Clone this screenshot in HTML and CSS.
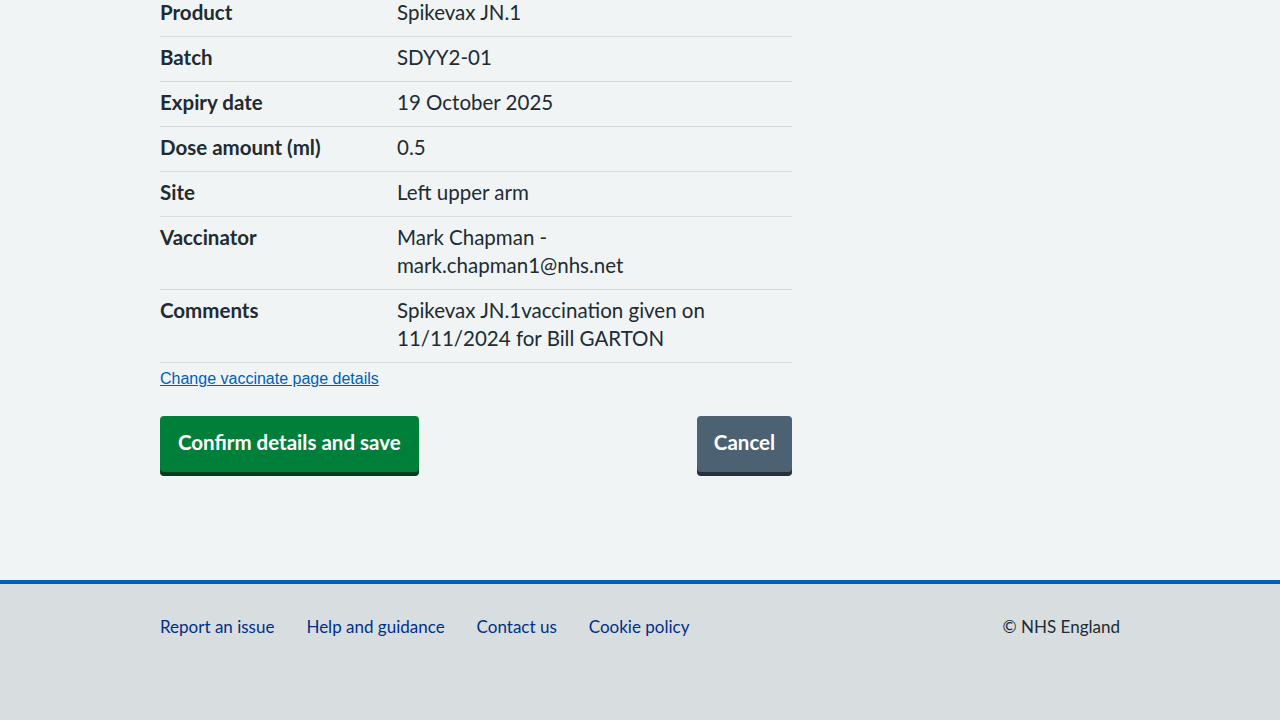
FILE: index.html
```html
<!DOCTYPE html>
<html lang="en">
<head>
<meta charset="utf-8">
<title>Check and confirm</title>
<link rel="stylesheet" href="styles.css">
</head>
<body>
<main class="page">
  <div class="container">
    <div class="content">
      <dl class="summary">
        <div class="row"><dt class="key">Product</dt><dd class="value">Spikevax JN.1</dd></div>
        <div class="row"><dt class="key">Batch</dt><dd class="value">SDYY2-01</dd></div>
        <div class="row"><dt class="key">Expiry date</dt><dd class="value">19 October 2025</dd></div>
        <div class="row"><dt class="key">Dose amount (ml)</dt><dd class="value">0.5</dd></div>
        <div class="row"><dt class="key">Site</dt><dd class="value">Left upper arm</dd></div>
        <div class="row"><dt class="key">Vaccinator</dt><dd class="value">Mark Chapman - mark.chapman1@nhs.net</dd></div>
        <div class="row"><dt class="key">Comments</dt><dd class="value">Spikevax JN.1vaccination given on 11/11/2024 for Bill GARTON</dd></div>
      </dl>
      <p class="change"><a class="change-link" href="#">Change vaccinate page details</a></p>
      <div class="actions">
        <button class="button button-primary" type="button">Confirm details and save</button>
        <button class="button button-secondary" type="button">Cancel</button>
      </div>
    </div>
  </div>
</main>
<footer class="footer">
  <div class="container footer-inner">
    <ul class="footer-links">
      <li><a href="#">Report an issue</a></li>
      <li><a href="#">Help and guidance</a></li>
      <li><a href="#">Contact us</a></li>
      <li><a href="#">Cookie policy</a></li>
    </ul>
    <p class="copyright">© NHS England</p>
  </div>
</footer>
</body>
</html>
```

FILE: styles.css
```css
* { box-sizing: border-box; }
html, body { margin: 0; padding: 0; }
body {
  background: #f0f4f5;
  color: #212b32;
  font-family: Lato, "Noto Sans", sans-serif;
  height: 720px;
  overflow: hidden;
}
.container {
  width: 960px;
  margin: 0 auto;
}
.page {
  padding-bottom: 108px;
}
.content {
  width: 632px;
  margin-top: -8px;
}
.summary {
  margin: 0;
  font-size: 20.5px;
  line-height: 28px;
}
.row {
  display: flex;
  border-bottom: 1px solid #d8dde0;
}
.key {
  width: 237px;
  padding: 6px 16px 10px 0;
  font-weight: 700;
  margin: 0;
}
.value {
  flex: 1;
  padding: 6px 70px 10px 0;
  margin: 0;
}
.change {
  margin: 0;
  padding-top: 7px;
  font-family: "Liberation Sans", Arial, sans-serif;
  font-size: 16px;
  line-height: 18px;
}
.change-link {
  color: #005eb8;
  text-decoration: underline;
}
.actions {
  display: flex;
  justify-content: space-between;
  margin-top: 28px;
}
.button {
  font-family: Lato, "Noto Sans", sans-serif;
  font-weight: 700;
  font-size: 20.5px;
  line-height: 28px;
  color: #fff;
  border: 2px solid transparent;
  border-radius: 4px;
  padding: 10px 16px 14px;
  cursor: pointer;
}
.button-primary {
  background: #007f3b;
  box-shadow: 0 4px 0 #00401e;
}
.button-secondary {
  width: 95px;
  padding-left: 0;
  padding-right: 0;
  text-align: center;
  background: #4c6272;
  box-shadow: 0 4px 0 #263139;
}
.footer {
  background: #d8dde0;
  border-top: 4px solid #005eb8;
  height: 140px;
}
.footer-inner {
  display: flex;
  justify-content: space-between;
  align-items: flex-start;
  padding-top: 31px;
  font-size: 17px;
  line-height: 24px;
}
.footer-links {
  display: flex;
  gap: 32px;
  list-style: none;
  margin: 0;
  padding: 0;
}
.footer-links a {
  color: #003087;
  text-decoration: none;
}
.copyright {
  margin: 0;
  color: #212b32;
}
```
